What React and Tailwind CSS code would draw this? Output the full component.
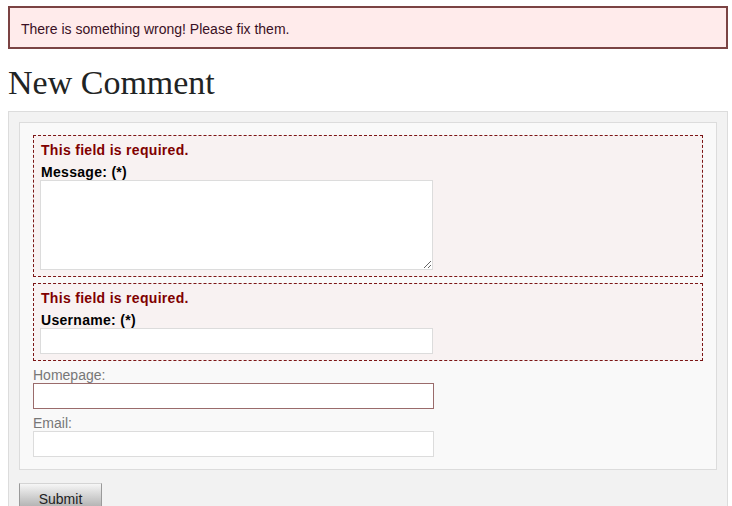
import React from "react";

const ErrorField = ({ label, children }) => (
  <div className="border border-dashed border-[#7b1515] bg-[#f8f2f2] pl-[6px] pr-[7px] pt-[7px] pb-[6px]">
    <p className="pl-px text-[14px] leading-[15px] font-bold tracking-[0.3px] text-[#800000]">This field is required.</p>
    <label className="block pl-px mt-[6px] text-[14px] leading-[16px] font-bold tracking-[0.3px] text-black">{label}</label>
    {children}
  </div>
);

const App = () => {
  return (
    <div className="pl-2 pr-1 pt-[6px] bg-white min-h-[506px] text-[14px]" style={{ fontFamily: '"Liberation Sans", Arial, sans-serif' }}>
      <div className="border-2 border-[#7b4343] bg-[#ffebeb] px-[11px] pt-[13px] pb-[9px] leading-[17px] text-[#3a1024]">
        There is something wrong! Please fix them.
      </div>

      <h1 className="mt-[14px] mb-[9px] text-[34px] leading-[39px] text-[#1f2424]" style={{ fontFamily: '"Liberation Serif", "Times New Roman", serif' }}>
        New Comment
      </h1>

      <div className="border border-[#dcdcdc] bg-[#f2f2f2] p-[10px] pb-6">
        <div className="border border-[#dcdcdc] bg-[#f9f9f9] px-[13px] pt-[12px] pb-[12px]">
          <ErrorField label="Message: (*)">
            <textarea className="block w-[393px] h-[90px] border border-[#dcdcdc] bg-white resize-y"></textarea>
          </ErrorField>

          <div className="mt-[6px]">
            <ErrorField label="Username: (*)">
              <input type="text" className="block w-[393px] h-[26px] border border-[#dcdcdc] bg-white" />
            </ErrorField>
          </div>

          <label className="block mt-[6px] leading-[16px] text-[#777]">Homepage:</label>
          <input type="text" className="block w-[401px] h-[26px] border border-[#9a6b6b] bg-white" />

          <label className="block mt-[6px] leading-[16px] text-[#777]">Email:</label>
          <input type="text" className="block w-[401px] h-[26px] border border-[#dcdcdc] bg-white" />
        </div>

        <button className="mt-[13px] w-[83px] h-[30px] border border-[#9a9a9a] border-t-[#d4d4d4] bg-gradient-to-b from-[#f6f6f6] to-[#a4a4a4] text-[14px] text-[#222] pt-[2px]">
          Submit
        </button>
      </div>
    </div>
  );
};

export default App;
